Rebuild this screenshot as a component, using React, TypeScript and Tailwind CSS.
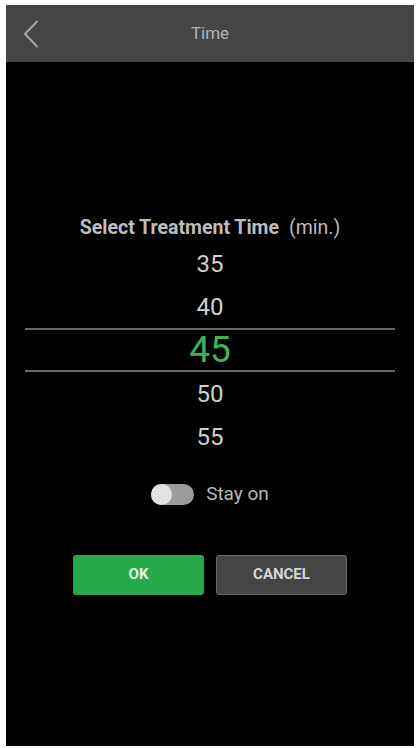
const values = [35, 40, 45, 50, 55];

export default function App() {
  const selected = 45;

  return (
    <div className="w-[418px] h-[748px] bg-white pl-[6px] pt-[5px] font-['Roboto',sans-serif]">
      <div className="w-[408px] h-[741px] bg-black flex flex-col">
        {/* header */}
        <div className="relative h-[57px] bg-[#454545] flex items-center justify-center shrink-0">
          <svg
            className="absolute left-[17px] top-[15px]"
            width="16"
            height="28"
            viewBox="0 0 16 28"
            fill="none"
          >
            <polyline
              points="14,1.5 2,14 14,26.5"
              stroke="#a4a4a4"
              strokeWidth="2"
              strokeLinecap="round"
              strokeLinejoin="round"
            />
          </svg>
          <span className="text-[17px] text-[#b4b4b4]">Time</span>
        </div>

        <div className="flex flex-col mt-[155px]">
          <div className="h-[22px] flex items-center justify-center text-[19.5px] text-[#bdbdbd]">
            <span className="font-bold">Select Treatment Time</span>
            <span className="ml-[10px]">(min.)</span>
          </div>

          {/* picker */}
          <div className="flex flex-col mt-[3px]">
            {values.map((v) =>
              v === selected ? (
                <div
                  key={v}
                  className="mx-[19px] h-[44px] border-y-2 border-[#6a6a6a] flex items-center justify-center text-[37px] text-[#3cb55a]"
                >
                  {v}
                </div>
              ) : (
                <div
                  key={v}
                  className="h-[43px] flex items-center justify-center text-[24px] text-[#cfcfcf]"
                >
                  {v}
                </div>
              )
            )}
          </div>

          {/* toggle */}
          <div className="flex items-center justify-center gap-[12px] mt-[22px]">
            <div className="relative w-[43px] h-[21px] rounded-full bg-[#9c9c9c]">
              <div className="absolute left-0 top-0 w-[21px] h-[21px] rounded-full bg-[#e2e2e2]" />
            </div>
            <span className="text-[19px] text-[#b8b8b8]">Stay on</span>
          </div>

          {/* actions */}
          <div className="flex justify-center gap-[12px] mt-[46px]">
            <button className="w-[131px] h-[40px] rounded-[3px] bg-[#25a94b] text-[15px] font-bold text-[#e3f4e6]">
              OK
            </button>
            <button className="w-[131px] h-[40px] rounded-[3px] bg-[#454545] border border-[#6a6a6a] text-[15px] font-bold text-[#d6d6d6]">
              CANCEL
            </button>
          </div>
        </div>
      </div>
    </div>
  );
}
